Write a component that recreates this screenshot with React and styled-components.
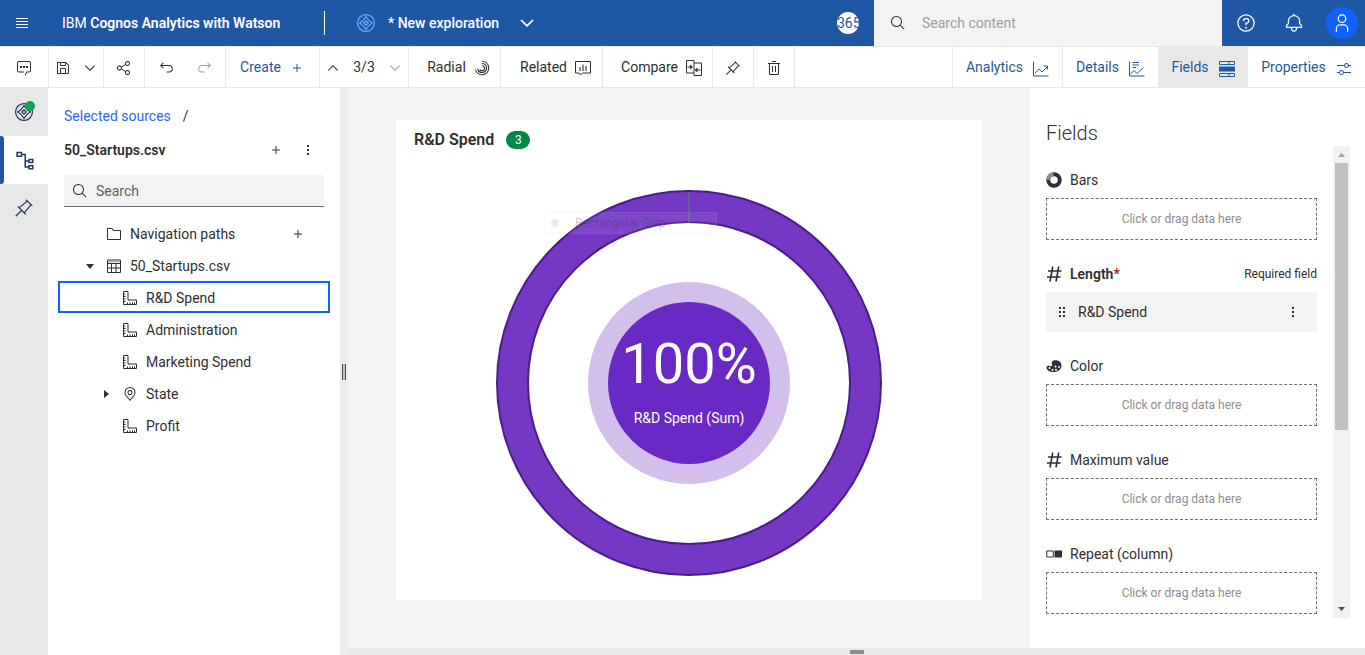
import React from 'react';
import styled, { createGlobalStyle } from 'styled-components';

const ink = '#2f2f2f';
const blue = '#1f57a4';
const rule = '#e8e8e8';

const GlobalStyle = createGlobalStyle`
  * { box-sizing: border-box; }
  body { margin: 0; font-family: Roboto, "Liberation Sans", sans-serif; font-size: 14px; line-height: 20px; color: ${ink}; background: #fff; }
  button, input { font: inherit; color: inherit; padding: 0; }
  button { background: none; border: 0; cursor: pointer; }
  h1, h2, h3, ul, p { margin: 0; padding: 0; font-size: inherit; font-weight: inherit; }
  ul { list-style: none; }
  a { text-decoration: none; }
  svg { display: block; flex: none; }
`;

const shapes = {
  save: <path d="M27.71 9.29l-5-5A1 1 0 0 0 22 4H6a2 2 0 0 0-2 2v20a2 2 0 0 0 2 2h20a2 2 0 0 0 2-2V10a1 1 0 0 0-.29-.71zM12 6h8v4h-8zm8 20h-8v-8h8zm2 0v-8a2 2 0 0 0-2-2h-8a2 2 0 0 0-2 2v8H6V6h4v4a2 2 0 0 0 2 2h8a2 2 0 0 0 2-2V6.41l4 4V26z" />,
  chevronDown: <path d="M16 22L6 12l1.4-1.4 8.6 8.6 8.6-8.6L26 12z" />,
  chevronUp: <path d="M16 10L6 20l1.4 1.4 8.6-8.6 8.6 8.6L26 20z" />,
  share: <path d="M23 20a5 5 0 0 0-3.89 1.89l-7.31-4.57a4.46 4.46 0 0 0 0-2.64l7.31-4.57A5 5 0 1 0 18 7a4.79 4.79 0 0 0 .2 1.32l-7.31 4.57a5 5 0 1 0 0 6.22l7.31 4.57A4.79 4.79 0 0 0 18 25a5 5 0 1 0 5-5zm0-16a3 3 0 1 1-3 3 3 3 0 0 1 3-3zM7 19a3 3 0 1 1 3-3 3 3 0 0 1-3 3zm16 9a3 3 0 1 1 3-3 3 3 0 0 1-3 3z" />,
  undo: <path d="M22 10H7.8l3.6-3.6L10 5l-6 6 6 6 1.4-1.4L7.8 12H22a5.5 5.5 0 0 1 0 11h-5v2h5a7.5 7.5 0 0 0 0-15z" />,
  redo: <path d="M10 10h14.2l-3.6-3.6L22 5l6 6-6 6-1.4-1.4 3.6-3.6H10a5.5 5.5 0 0 0 0 11h5v2h-5a7.5 7.5 0 0 1 0-15z" />,
  plus: <path d="M17 15V8h-2v7H8v2h7v7h2v-7h7v-2z" />,
  search: <path d="M29 27.59l-7.55-7.56a11 11 0 1 0-1.42 1.42L27.59 29zM4 13a9 9 0 1 1 9 9 9 9 0 0 1-9-9z" />,
  bell: <path d="M28.7 19.3L26 16.6V13a10 10 0 0 0-9-9.95V1h-2v2.05A10 10 0 0 0 6 13v3.6l-2.7 2.7A1 1 0 0 0 3 20v3a1 1 0 0 0 1 1h7v.8a5.15 5.15 0 0 0 4.5 5.2A5 5 0 0 0 21 25v-1h7a1 1 0 0 0 1-1v-3a1 1 0 0 0-.3-.7zM19 25a3 3 0 0 1-6 0v-1h6zm8-3H5v-1.6l2.7-2.7A1 1 0 0 0 8 17v-4a8 8 0 0 1 16 0v4a1 1 0 0 0 .3.7l2.7 2.7z" />,
  user: <path d="M16 4a5 5 0 1 1-5 5 5 5 0 0 1 5-5m0-2a7 7 0 1 0 7 7 7 7 0 0 0-7-7zm10 28h-2v-5a5 5 0 0 0-5-5h-6a5 5 0 0 0-5 5v5H6v-5a7 7 0 0 1 7-7h6a7 7 0 0 1 7 7z" />,
  help: <><path d="M16 2a14 14 0 1 0 14 14A14 14 0 0 0 16 2zm0 26a12 12 0 1 1 12-12 12 12 0 0 1-12 12z" /><circle cx="16" cy="23.5" r="1.5" /><path d="M17 8h-1.5a4.5 4.5 0 0 0-4.5 4.5v.5h2v-.5a2.5 2.5 0 0 1 2.5-2.5H17a2.5 2.5 0 0 1 0 5h-2v4.5h2V17a4.5 4.5 0 0 0 0-9z" /></>,
  trash: <path d="M12 12h2v12h-2zM18 12h2v12h-2zM4 6v2h2v20a2 2 0 0 0 2 2h16a2 2 0 0 0 2-2V8h2V6zm4 22V8h16v20zM12 2h8v2h-8z" />,
  pin: <path d="M28.59 13.31L30 11.9 20 2l-1.31 1.42 1.18 1.18-11.49 9.72-1.72-1.71L5.25 14l5.66 5.68L2 28.58 3.41 30l8.91-8.91L18 26.75l1.39-1.42-1.71-1.71 9.72-11.49zM16.26 22.2L9.8 15.74l11.49-9.72 4.69 4.69z" />,
  folder: <path d="M11.17 6l4 4H28v16H4V6h7.17m0-2H4a2 2 0 0 0-2 2v20a2 2 0 0 0 2 2h24a2 2 0 0 0 2-2V10a2 2 0 0 0-2-2H16l-3.41-3.41A2 2 0 0 0 11.17 4z" />,
  location: <path d="M16 18a5 5 0 1 1 5-5 5 5 0 0 1-5 5zm0-8a3 3 0 1 0 3 3 3 3 0 0 0-3-3zm0 20L7.56 20.05l-.34-.45A10.9 10.9 0 0 1 5 13a11 11 0 0 1 22 0 10.9 10.9 0 0 1-2.2 6.6l-.36.45zM8.8 18.4l.3.37L16 26.9l6.9-8.15.29-.36A8.9 8.9 0 0 0 25 13a9 9 0 1 0-18 0 8.9 8.9 0 0 0 1.8 5.4z" />,
  adjust: <path d="M30 8h-4.1a5 5 0 0 0-9.8 0H2v2h14.1a5 5 0 0 0 9.8 0H30zm-9 4a3 3 0 1 1 3-3 3 3 0 0 1-3 3zM2 24h4.1a5 5 0 0 0 9.8 0H30v-2H15.9a5 5 0 0 0-9.8 0H2zm9-4a3 3 0 1 1-3 3 3 3 0 0 1 3-3z" />,
  comment: <><path d="M19 31l-1.7-1 3.7-7h5a2 2 0 0 0 2-2V6a2 2 0 0 0-2-2H6a2 2 0 0 0-2 2v15a2 2 0 0 0 2 2h10v2H6a4 4 0 0 1-4-4V6a4 4 0 0 1 4-4h20a4 4 0 0 1 4 4v15a4 4 0 0 1-4 4h-3.8z" /><path d="M8 12h4v4H8zM14 12h4v4h-4zM20 12h4v4h-4z" /></>,
  dots: <path d="M14 6h4v4h-4zM14 14h4v4h-4zM14 22h4v4h-4z" />,
  drag: <path d="M10 6h4v4h-4zM18 6h4v4h-4zM10 14h4v4h-4zM18 14h4v4h-4zM10 22h4v4h-4zM18 22h4v4h-4z" />,
  caretDown: <path d="M24 12l-8 10-8-10z" />,
  caretRight: <path d="M12 8l10 8-10 8z" />,
  explore: <g fill="none" stroke="currentColor" strokeWidth="2"><circle cx="16" cy="16" r="13.5" /><path d="M16 6c3 5 5 7 10 10-5 3-7 5-10 10-3-5-5-7-10-10 5-3 7-5 10-10z" /><path d="M16 12.5l3.5 3.5-3.500 3.500-3.500-3.500z" /></g>,
  tree: <g fill="none" stroke="currentColor" strokeWidth="2.4"><path d="M5 4h7v6H5zM24 15h6v5h-6zM24 25h6v5h-6zM12 7h6v20h6M18 17.5h6" /></g>,
  table: <g fill="none" stroke="currentColor" strokeWidth="2"><path d="M3 4h26v25H3zM3 11h26M3 20h26M11 11v18M20 11v18" /><path d="M3 7.5h26" strokeWidth="1" /></g>,
  ruler: <g fill="none" stroke="currentColor" strokeWidth="2"><path d="M3 3h9v17h17v9H3zM3 8h4M3 13h4M3 18h4M3 23h4M11 29v-4M16 29v-4M21 29v-4M25 29v-4" /></g>,
  radial: <g fill="none" stroke="currentColor" strokeWidth="2.2"><path d="M16 2.5a13.5 13.5 0 1 1-12.5 19M16 7a9 9 0 1 1-8.500 12M16 11.500a5 5 0 1 1-4.500 7" /><path d="M2.500 17a13.500 13.500 0 0 0 1 4.500M7 16.500l.5 3" opacity=".5" /></g>,
  related: <g fill="none" stroke="currentColor" strokeWidth="2"><path d="M1 3h30v23H15l-4 4-3-4H1z" /><path d="M10 22v-8M16 22V9M22 22V12" strokeWidth="4" opacity=".55" /></g>,
  compare: <g fill="none" stroke="currentColor" strokeWidth="2"><path d="M16 26H1V1h15v30h15V6H16" /><path d="M3 14h8M19 20h10" /><path d="M8 9l6 5-6 5zM23 15l-6 5 6 5z" fill="currentColor" stroke="none" /></g>,
  analytics: <g fill="none" stroke="currentColor" strokeWidth="2"><path d="M1 1v29h30M4 24l8-8 6 6 11-11M22 10h7v7" /></g>,
  details: <g fill="none" stroke="currentColor" strokeWidth="2"><path d="M1 1v29h30M7 3h13M7 8h13M7 13h7M3 26l7-7 6 6 13-12" /></g>,
  fields: <g fill="none" stroke="currentColor" strokeWidth="2"><path d="M1 1h30v6H1zM1 25h30v6H1zM20 1v6M20 25v6" /><path d="M0 11h32v10H0z" fill="currentColor" stroke="none" /></g>,
  hash: <g fill="none" stroke="currentColor" strokeWidth="3.2"><path d="M13.5 1L8 31M25.5 1L20 31M4 10h27M2 22h27" /></g>,
  ring: <g fill="none" stroke="currentColor" strokeWidth="8"><circle cx="16" cy="16" r="11.5" /><path d="M4.5 16A11.5 11.5 0 0 1 15 4.5" stroke="#8d8d8d" /></g>,
  palette: <><path d="M15 5c9-2 16 3 16 10 0 8-7 13-16 13-8 0-14-4-14-9 0-3 3-4 6-3 4 1 6 0 5-3-2-3 0-7 3-8z" /><g fill="#fff"><circle cx="7" cy="20" r="2" /><circle cx="13" cy="24" r="2" /><circle cx="20" cy="23.5" r="2" /><circle cx="26" cy="18" r="2" /><circle cx="19" cy="17" r="2" /></g></>,
  repeat: <><path d="M1.5 10h13v12h-13z" fill="none" stroke="currentColor" strokeWidth="2" /><path d="M17 9h15v14H17z" /></>,
  menu: <path d="M4 6h24v2H4zM4 12h24v2H4zM4 18h24v2H4zM4 24h24v2H4z" />,
};

const Icon = ({ name, size = 16 }) => (
  <svg width={size} height={size} viewBox="0 0 32 32" fill="currentColor" aria-hidden="true">{shapes[name]}</svg>
);

const Page = styled.div`display: flex; flex-direction: column; min-height: 100vh;`;

const Banner = styled.header`
  display: flex; align-items: center; height: 47px;
  background: ${blue}; color: #fff; border-bottom: 1px solid ${rule};
`;
const MenuButton = styled.button`display: grid; place-items: center; width: 44px; height: 46px;`;
const Brand = styled.h1`
  margin-left: 18px; width: 262px; white-space: nowrap; font-weight: 400;
  b { font-weight: 600; }
`;
const Divider = styled.span`width: 1px; height: 24px; background: #fff;`;
const Exploration = styled.button`
  display: flex; align-items: center; gap: 12px; margin-left: 31px; font-weight: 500; color: #fff; white-space: nowrap;
  svg:first-child { color: #6ea6ff; }
  svg:last-child { margin-left: 6px; stroke: currentColor; stroke-width: 1px; }
`;
const Trial = styled.span`
  width: 22px; height: 22px; margin: 0 15px 0 auto; overflow: hidden;
  border-radius: 50%; background: #fff; color: ${blue}; font-size: 14px; line-height: 22px;
`;
const ContentSearch = styled.label`
  display: flex; align-items: center; gap: 16px; width: 348px; height: 46px; padding-left: 16px;
  background: #f3f3f3; color: ${ink};
  input { flex: 1; min-width: 0; border: 0; background: none; outline: 0; }
  input::placeholder { color: #a0a0a0; opacity: 1; }
`;
const BannerIcons = styled.div`display: flex; align-items: center; padding-right: 7px;`;
const BannerButton = styled.button`display: grid; place-items: center; width: 48px; height: 46px; color: #fff;`;
const Avatar = styled.button`display: grid; place-items: center; width: 32px; height: 32px; margin-left: 8px; border-radius: 50%; background: #0f62fe;`;

const Toolbar = styled.nav`display: flex; height: 41px; border-bottom: 1px solid ${rule};`;
const ToolGroup = styled.div`
  display: flex; align-items: center; justify-content: center; gap: ${p => p.$gap || 0}px;
  width: ${p => p.$width}px; padding-left: ${p => (p.$wide ? 8 : 0)}px; border-right: 1px solid ${rule};
`;
const Tool = styled.button`
  display: flex; align-items: center; justify-content: center; gap: 8px; height: 100%;
  color: ${p => (p.$accent ? blue : ink)}; opacity: ${p => (p.$dim ? 0.45 : 1)};
  svg { margin-top: 2px; }
`;
const Spacer = styled.span`flex: 1;`;
const PanelTab = styled.button`
  display: flex; align-items: center; justify-content: center; gap: 10px; width: ${p => p.$width}px;
  color: ${blue}; background: ${p => (p.$active ? rule : 'transparent')};
  border-left: ${p => (p.$line ? 1 : 0)}px solid ${rule};
  svg { margin-top: 3px; }
`;

const Workspace = styled.div`display: flex; flex: 1;`;
const Rail = styled.nav`width: 48px; background: ${rule}; color: #22375f;`;
const RailButton = styled.button`
  position: relative; display: grid; place-items: center; width: 48px; height: 48px;
  background: ${p => (p.$active ? '#fff' : 'transparent')};
  &::before {
    content: ''; position: absolute; inset: 0 auto 0 0; width: 4px; border-radius: 0 3px 3px 0;
    background: ${p => (p.$active ? blue : 'transparent')};
  }
`;
const StatusDot = styled.span`position: absolute; top: 13px; left: 25px; width: 10px; height: 10px; border-radius: 50%; background: #00a85a;`;

const Sources = styled.aside`width: 292px; padding-top: 18px;`;
const Crumbs = styled.p`display: flex; gap: 12px; padding: 0 16px; a { color: #2a66f5; }`;
const SourceHead = styled.div`
  display: flex; align-items: center; gap: 16px; height: 32px; margin: 8px 24px 9px 16px;
  h2 { flex: 1; font-weight: 600; }
`;
const SourceSearch = styled.label`
  display: flex; align-items: center; gap: 8px; height: 32px; margin: 0 16px 10px; padding: 0 8px;
  background: #f3f3f3; border-bottom: 1px solid #6f6f6f;
  input { flex: 1; min-width: 0; border: 0; background: none; outline: 0; }
  input::placeholder { color: #616161; opacity: 1; }
`;
const Tree = styled.ul`margin: 0 10px;`;
const TreeRow = styled.li`
  display: flex; align-items: center; gap: 8px; height: 32px; padding: 2px 24px 0 ${p => 24 + p.$level * 16}px;
  outline: ${p => (p.$selected ? '2px solid #0f62fe' : 'none')}; outline-offset: -2px;
  button { margin-left: auto; }
`;
const Twist = styled.span`width: 16px;`;

const Splitter = styled.div`
  display: grid; place-items: center; width: 8px; background: #ebebeb;
  span { width: 4px; height: 16px; border: solid #555; border-width: 0 1px; background: #bdbdbd; }
`;
const Right = styled.div`display: flex; flex: 1; flex-direction: column; min-width: 0;`;
const Stage = styled.div`display: flex; flex: 1;`;
const Canvas = styled.main`flex: 1; display: flex; padding: 32px 48px 48px; background: #f3f3f3;`;
const Card = styled.section`flex: 1; background: #fff; min-height: 480px;`;
const CardHead = styled.h2`
  display: flex; align-items: center; gap: 12px; height: 40px; padding: 0 18px; font-size: 16px; font-weight: 600;
  span { width: 24px; height: 18px; border-radius: 9px; background: #00884b; color: #fff; font-size: 12px; line-height: 18px; font-weight: 400; text-align: center; }
`;
const Chart = styled.div`position: relative; width: 386px; margin: 30px auto 0;`;
const Ghost = styled.div`
  position: absolute; top: 22px; left: 48px; display: flex; align-items: center; gap: 16px; width: 173px; height: 22px; padding: 0 6px;
  border: 1px solid rgba(150, 180, 230, 0.1); background: rgba(255, 255, 255, 0.08); color: rgba(40, 30, 90, 0.28); font-size: 12px;
  &::before { content: ''; width: 8px; height: 8px; border-radius: 50%; background: rgba(60, 60, 100, 0.1); }
`;
const ChartText = styled.text`fill: #fff; text-anchor: middle; font-size: ${p => p.$size}px;`;

const FieldsPanel = styled.aside`width: 335px; padding: 35px 15px 30px 16px;`;
const PanelTitle = styled.h2`font-size: 20px; line-height: 20px; font-weight: 300; margin-bottom: 3px;`;
const FieldsBody = styled.div`display: flex; gap: 16px; height: 472px;`;
const Slots = styled.div`flex: 1; display: flex; flex-direction: column; gap: 24px; padding-top: 24px;`;
const Slot = styled.section`display: flex; flex-direction: column; gap: 8px;`;
const SlotHead = styled.h3`
  display: flex; align-items: center; gap: 8px; font-weight: ${p => (p.$required ? 600 : 400)};
  i { color: #b81921; font-style: normal; }
  small { margin-left: auto; font-size: 12px; font-weight: 400; }
`;
const Drop = styled.button`height: 42px; border: 1px dashed #6f6f6f; color: #8d8d8d; font-size: 12px;`;
const Chip = styled.div`
  display: flex; align-items: center; gap: 8px; height: 40px; padding: 0 16px 0 8px; background: #f3f3f3;
  button { margin-left: auto; }
`;
const Scrollbar = styled.div`
  display: flex; flex-direction: column; align-items: center; width: 17px; background: #f1f1f1;
  span { width: 13px; height: 267px; margin-bottom: auto; background: #c1c1c1; }
`;
const Arrow = styled.svg`width: 17px; height: 17px; fill: ${p => p.$fill};`;
const BottomBar = styled.footer`
  display: flex; justify-content: center; height: 7px; padding-top: 2px; background: ${rule};
  span { width: 14px; height: 4px; background: #8d8d8d; }
`;

const tree = [
  { label: 'Navigation paths', icon: 'folder', level: 0, add: true },
  { label: '50_Startups.csv', icon: 'table', level: 0, twist: 'caretDown' },
  { label: 'R&D Spend', icon: 'ruler', level: 1, selected: true },
  { label: 'Administration', icon: 'ruler', level: 1 },
  { label: 'Marketing Spend', icon: 'ruler', level: 1 },
  { label: 'State', icon: 'location', level: 1, twist: 'caretRight' },
  { label: 'Profit', icon: 'ruler', level: 1 },
];

const slots = [
  { label: 'Bars', icon: 'ring' },
  { label: 'Length', icon: 'hash', value: 'R&D Spend' },
  { label: 'Color', icon: 'palette' },
  { label: 'Maximum value', icon: 'hash' },
  { label: 'Repeat (column)', icon: 'repeat' },
];

const panels = [
  { label: 'Analytics', icon: 'analytics', width: 110, line: true },
  { label: 'Details', icon: 'details', width: 96, line: true },
  { label: 'Fields', icon: 'fields', width: 90, active: true },
  { label: 'Properties', icon: 'adjust', width: 117 },
];

export default function App() {
  return (
    <Page>
      <GlobalStyle />
      <Banner>
        <MenuButton aria-label="Menu"><Icon name="menu" /></MenuButton>
        <Brand>IBM <b>Cognos Analytics with Watson</b></Brand>
        <Divider />
        <Exploration><Icon name="explore" size={20} />* New exploration<Icon name="chevronDown" size={20} /></Exploration>
        <Trial>365</Trial>
        <ContentSearch>
          <Icon name="search" />
          <input type="search" placeholder="Search content" aria-label="Search content" />
        </ContentSearch>
        <BannerIcons>
          <BannerButton aria-label="Help"><Icon name="help" size={20} /></BannerButton>
          <BannerButton aria-label="Notifications"><Icon name="bell" size={20} /></BannerButton>
          <Avatar aria-label="Account"><Icon name="user" size={20} /></Avatar>
        </BannerIcons>
      </Banner>
      <Toolbar>
        <ToolGroup $width={49}><Tool aria-label="Comments"><Icon name="comment" /></Tool></ToolGroup>
        <ToolGroup $width={55} $gap={11}>
          <Tool aria-label="Save"><Icon name="save" /></Tool>
          <Tool aria-label="Save options"><Icon name="chevronDown" /></Tool>
        </ToolGroup>
        <ToolGroup $width={41}><Tool aria-label="Share"><Icon name="share" /></Tool></ToolGroup>
        <ToolGroup $width={81} $gap={23}>
          <Tool aria-label="Undo"><Icon name="undo" /></Tool>
          <Tool $dim aria-label="Redo"><Icon name="redo" /></Tool>
        </ToolGroup>
        <ToolGroup $width={94}><Tool $accent>Create <Icon name="plus" /></Tool></ToolGroup>
        <ToolGroup $width={89} $gap={12}>
          <Tool aria-label="Previous"><Icon name="chevronUp" /></Tool>
          3/3
          <Tool $dim aria-label="Next"><Icon name="chevronDown" /></Tool>
        </ToolGroup>
        <ToolGroup $wide $width={92}><Tool>Radial <Icon name="radial" /></Tool></ToolGroup>
        <ToolGroup $wide $width={102}><Tool>Related <Icon name="related" /></Tool></ToolGroup>
        <ToolGroup $wide $width={110}><Tool>Compare <Icon name="compare" /></Tool></ToolGroup>
        <ToolGroup $width={41}><Tool aria-label="Pin"><Icon name="pin" /></Tool></ToolGroup>
        <ToolGroup $width={41}><Tool aria-label="Delete"><Icon name="trash" /></Tool></ToolGroup>
        <Spacer />
        {panels.map(p => (
          <PanelTab key={p.label} $width={p.width} $line={p.line} $active={p.active}>{p.label} <Icon name={p.icon} /></PanelTab>
        ))}
      </Toolbar>
      <Workspace>
        <Rail>
          <RailButton aria-label="Explorations"><Icon name="explore" size={20} /><StatusDot /></RailButton>
          <RailButton $active aria-label="Sources"><Icon name="tree" size={20} /></RailButton>
          <RailButton aria-label="Pinned"><Icon name="pin" size={20} /></RailButton>
        </Rail>
        <Sources>
          <Crumbs><a href="#sources">Selected sources</a><span>/</span></Crumbs>
          <SourceHead>
            <h2>50_Startups.csv</h2>
            <button aria-label="Add source"><Icon name="plus" /></button>
            <button aria-label="Source options"><Icon name="dots" /></button>
          </SourceHead>
          <SourceSearch>
            <Icon name="search" />
            <input type="search" placeholder="Search" aria-label="Search sources" />
          </SourceSearch>
          <Tree>
            {tree.map((row, i) => (
              <TreeRow key={i} $level={row.level} $selected={row.selected}>
                <Twist>{row.twist && <Icon name={row.twist} />}</Twist>
                <Icon name={row.icon} />
                {row.label}
                {row.add && <button aria-label="Add navigation path"><Icon name="plus" /></button>}
              </TreeRow>
            ))}
          </Tree>
        </Sources>
        <Splitter><span /></Splitter>
        <Right>
          <Stage>
            <Canvas>
              <Card>
                <CardHead>R&amp;D Spend <span>3</span></CardHead>
                <Chart>
                  <svg width="386" height="386" viewBox="0 0 386 386" role="img" aria-label="R&D Spend 100%">
                    <circle cx="193" cy="193" r="176.5" fill="none" stroke="#491d8b" strokeWidth="33" />
                    <circle cx="193" cy="193" r="176.5" fill="none" stroke="#7538c5" strokeWidth="29" />
                    <path d="M193 2v30" stroke="#6f5a9e" strokeWidth="2" />
                    <circle cx="193" cy="193" r="101" fill="#d2bfec" />
                    <circle cx="193" cy="193" r="81" fill="#6929c4" />
                    <ChartText x="193" y="193" $size={56}>100%</ChartText>
                    <ChartText x="193" y="233" $size={14}>R&amp;D Spend (Sum)</ChartText>
                  </svg>
                  <Ghost>Rectangular Snip</Ghost>
                </Chart>
              </Card>
            </Canvas>
            <FieldsPanel>
              <PanelTitle>Fields</PanelTitle>
              <FieldsBody>
                <Slots>
                  {slots.map(s => (
                    <Slot key={s.label}>
                      <SlotHead $required={s.value}>
                        <Icon name={s.icon} />
                        <span>{s.label}{s.value && <i>*</i>}</span>
                        {s.value && <small>Required field</small>}
                      </SlotHead>
                      {s.value
                        ? <Chip><Icon name="drag" />{s.value}<button aria-label="Field options"><Icon name="dots" /></button></Chip>
                        : <Drop>Click or drag data here</Drop>}
                    </Slot>
                  ))}
                </Slots>
                <Scrollbar>
                  <Arrow viewBox="0 0 17 17" $fill="#a3a3a3"><path d="M5 11h7L8.5 7z" /></Arrow>
                  <span />
                  <Arrow viewBox="0 0 17 17" $fill="#505050"><path d="M5 6h7l-3.5 4z" /></Arrow>
                </Scrollbar>
              </FieldsBody>
            </FieldsPanel>
          </Stage>
          <BottomBar><span /></BottomBar>
        </Right>
      </Workspace>
    </Page>
  );
}
